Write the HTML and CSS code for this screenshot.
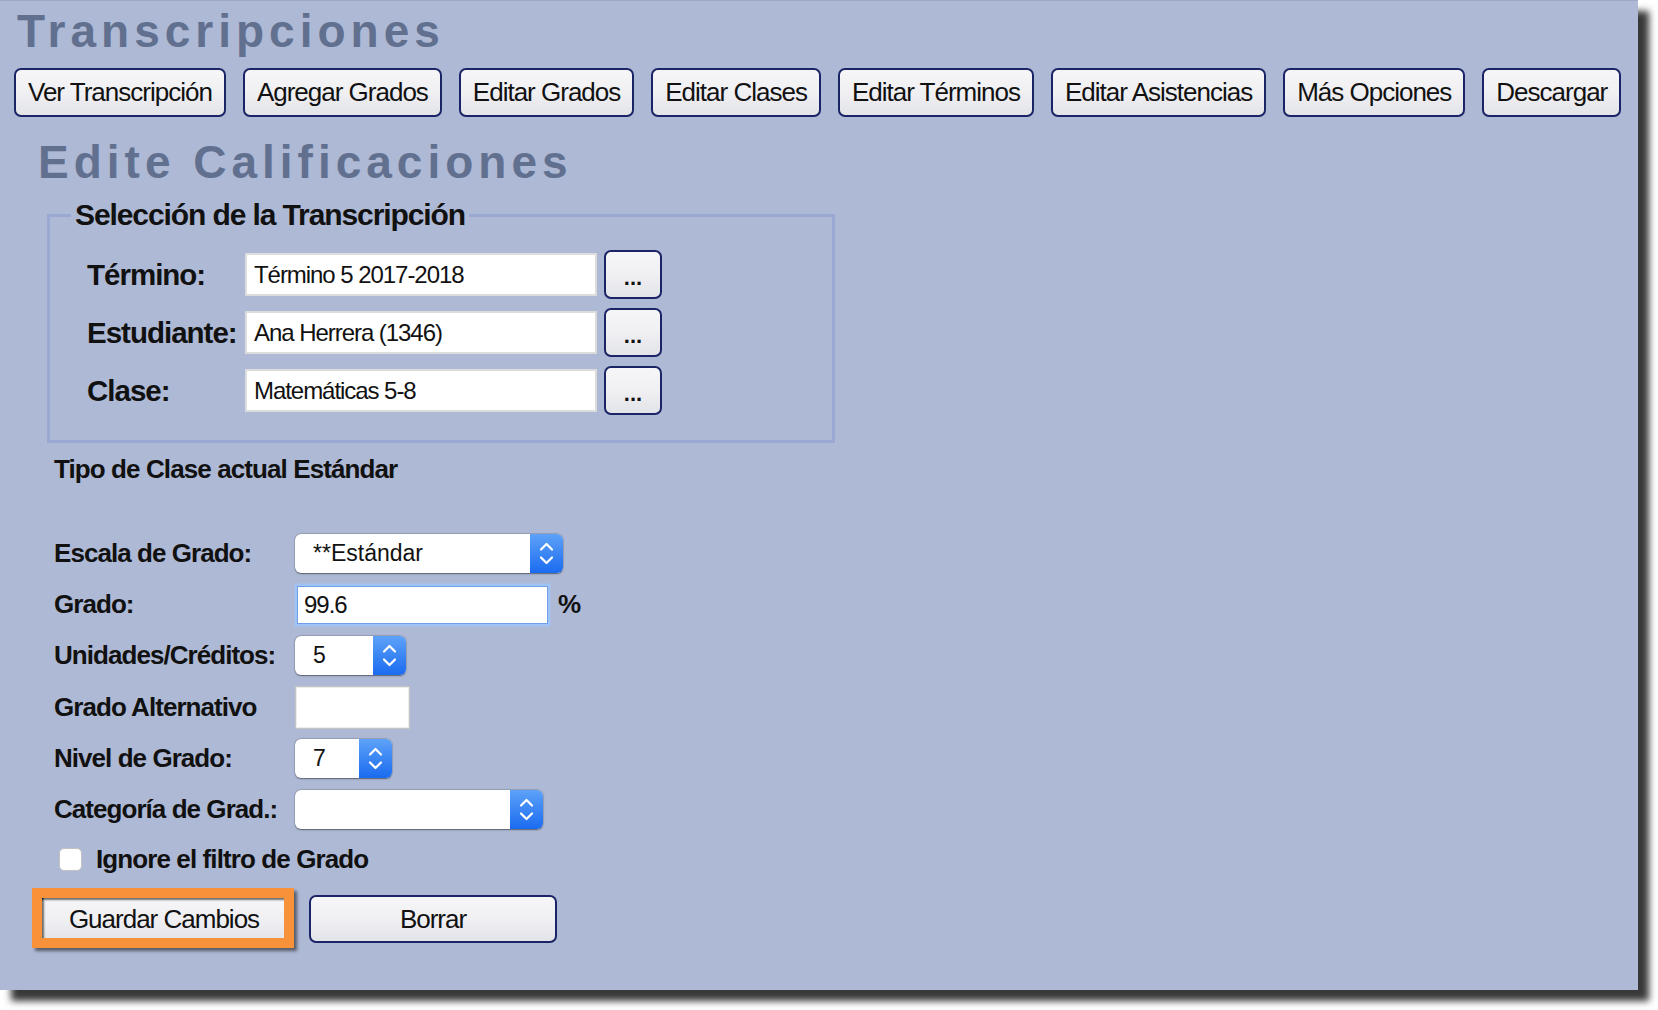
FILE: index.html
```html
<!DOCTYPE html>
<html>
<head>
  <title>Transcripciones</title>
  <link rel="stylesheet" href="styles.css">
</head>
<body>
  <div class="window">
    <h1 class="page-title">Transcripciones</h1>

    <div class="tabs">
      <button class="btn">Ver Transcripción</button>
      <button class="btn">Agregar Grados</button>
      <button class="btn">Editar Grados</button>
      <button class="btn">Editar Clases</button>
      <button class="btn">Editar Términos</button>
      <button class="btn">Editar Asistencias</button>
      <button class="btn">Más Opciones</button>
      <button class="btn">Descargar</button>
    </div>

    <h2 class="section-title">Edite Calificaciones</h2>

    <fieldset class="pick">
      <legend>Selección de la Transcripción</legend>
      <div class="pick-rows">
        <div class="pick-row">
          <label class="pick-label">Término:</label>
          <input class="pick-input" type="text" value="Término 5 2017-2018">
          <button class="btn dots">...</button>
        </div>
        <div class="pick-row">
          <label class="pick-label">Estudiante:</label>
          <input class="pick-input" type="text" value="Ana Herrera (1346)">
          <button class="btn dots">...</button>
        </div>
        <div class="pick-row">
          <label class="pick-label">Clase:</label>
          <input class="pick-input" type="text" value="Matemáticas 5-8">
          <button class="btn dots">...</button>
        </div>
      </div>
    </fieldset>

    <p class="class-type">Tipo de Clase actual Estándar</p>

    <div class="grade-form">
      <div class="grade-row">
        <label class="grade-label">Escala de Grado:</label>
        <div class="select select-scale">
          <span class="select-value">**Estándar</span>
          <span class="select-arrow"><svg viewBox="0 0 33 39" width="33" height="39"><polyline points="11,15.5 16.5,10 22,15.5"/><polyline points="11,23.5 16.5,29 22,23.5"/></svg></span>
        </div>
      </div>
      <div class="grade-row">
        <label class="grade-label">Grado:</label>
        <input class="grade-input" type="text" value="99.6">
        <span class="percent">%</span>
      </div>
      <div class="grade-row">
        <label class="grade-label">Unidades/Créditos:</label>
        <div class="select select-units">
          <span class="select-value">5</span>
          <span class="select-arrow"><svg viewBox="0 0 33 39" width="33" height="39"><polyline points="11,15.5 16.5,10 22,15.5"/><polyline points="11,23.5 16.5,29 22,23.5"/></svg></span>
        </div>
      </div>
      <div class="grade-row">
        <label class="grade-label">Grado Alternativo</label>
        <input class="alt-input" type="text" value="">
      </div>
      <div class="grade-row">
        <label class="grade-label">Nivel de Grado:</label>
        <div class="select select-level">
          <span class="select-value">7</span>
          <span class="select-arrow"><svg viewBox="0 0 33 39" width="33" height="39"><polyline points="11,15.5 16.5,10 22,15.5"/><polyline points="11,23.5 16.5,29 22,23.5"/></svg></span>
        </div>
      </div>
      <div class="grade-row">
        <label class="grade-label">Categoría de Grad.:</label>
        <div class="select select-category">
          <span class="select-value"></span>
          <span class="select-arrow"><svg viewBox="0 0 33 39" width="33" height="39"><polyline points="11,15.5 16.5,10 22,15.5"/><polyline points="11,23.5 16.5,29 22,23.5"/></svg></span>
        </div>
      </div>
    </div>

    <div class="check-row">
      <input class="check" type="checkbox">
      <span class="check-label">Ignore el filtro de Grado</span>
    </div>

    <div class="actions">
      <div class="save">
        <button class="btn action-btn">Guardar Cambios</button>
        <span class="highlight"></span>
      </div>
      <button class="btn action-btn">Borrar</button>
    </div>
  </div>
</body>
</html>
```

FILE: styles.css
```css
body {
  margin: 0;
  padding-bottom: 20px;
  background: #fff;
  font-family: "Liberation Sans", Arial, sans-serif;
  color: #111;
}
.window {
  width: 1638px;
  height: 990px;
  box-sizing: border-box;
  background: #aeb9d5;
  border-top: 1px solid #9ea9c8;
  box-shadow: 11px 11px 7px rgba(0, 0, 0, 0.78);
}
.page-title,
.section-title {
  margin: 0;
  font-size: 46px;
  line-height: 56px;
  font-weight: bold;
  letter-spacing: 5px;
  color: #627090;
}
.page-title {
  padding: 2px 0 0 17px;
}
.section-title {
  margin: 17px 0 0 38px;
}
.tabs {
  display: flex;
  gap: 17px;
  margin: 9px 0 0 14px;
}
.btn {
  height: 49px;
  box-sizing: border-box;
  padding: 0 12px;
  border: 2px solid #1b2466;
  border-radius: 7px;
  background: linear-gradient(#f6f6f8, #f0f0f3 50%, #e3e4e8);
  font-family: "Liberation Sans", Arial, sans-serif;
  font-size: 26px;
  letter-spacing: -1px;
  color: #111;
}
.pick {
  width: 788px;
  box-sizing: border-box;
  margin: 9px 0 0 47px;
  padding: 19px 0 25px 21px;
  border: 3px solid #9aa8d4;
}
.pick legend {
  padding: 0 4px;
  font-size: 30px;
  line-height: 32px;
  font-weight: bold;
  letter-spacing: -1.1px;
}
.pick-rows {
  display: flex;
  flex-direction: column;
  gap: 9px;
  margin-left: 16px;
}
.pick-row {
  display: flex;
  align-items: center;
}
.pick-label {
  width: 158px;
  font-size: 29.5px;
  font-weight: bold;
  letter-spacing: -1px;
}
.pick-input {
  width: 352px;
  height: 43px;
  box-sizing: border-box;
  margin: 0;
  padding: 0 0 0 7px;
  border: 2px solid #dcdcdc;
  background: #fff;
  font-family: "Liberation Sans", Arial, sans-serif;
  font-size: 24px;
  letter-spacing: -1.05px;
  color: #111;
}
.dots {
  width: 58px;
  margin-left: 7px;
  padding: 6px 0 0;
  font-size: 22px;
  font-weight: bold;
  letter-spacing: 0;
}
.class-type {
  margin: 11px 0 0 54px;
  font-size: 26px;
  line-height: 30px;
  font-weight: bold;
  letter-spacing: -0.9px;
}
.grade-form {
  margin: 44px 0 0 54px;
}
.grade-row {
  display: flex;
  align-items: center;
  height: 51.2px;
}
.grade-label {
  width: 241px;
  font-size: 26px;
  font-weight: bold;
  letter-spacing: -0.95px;
}
.select {
  display: flex;
  height: 39px;
  border-radius: 6px;
  background: #fff;
  box-shadow: 0 0.5px 1.5px rgba(0, 0, 0, 0.45), 0 0 0 0.5px rgba(0, 0, 0, 0.12);
  overflow: hidden;
}
.select-scale { width: 268px; }
.select-units { width: 111px; }
.select-level { width: 97px; }
.select-category { width: 248px; }
.select-value {
  flex: 1;
  padding-left: 18px;
  font-size: 23px;
  line-height: 39px;
}
.select-arrow {
  width: 33px;
  background: linear-gradient(#5ea2f8, #1a6bf0);
}
.select-arrow svg {
  display: block;
  fill: none;
  stroke: #fff;
  stroke-width: 2.2;
  stroke-linecap: round;
  stroke-linejoin: round;
}
.grade-input {
  width: 251px;
  height: 38px;
  box-sizing: border-box;
  margin: 0 0 0 2px;
  padding: 0 0 0 6px;
  border: 1px solid #6d9ee6;
  box-shadow: 0 0 0 2.5px #a1c3f3;
  outline: none;
  font-family: "Liberation Sans", Arial, sans-serif;
  font-size: 24px;
  letter-spacing: -1px;
  color: #111;
}
.percent {
  margin-left: 10px;
  font-size: 26px;
  font-weight: bold;
}
.alt-input {
  width: 115px;
  height: 43px;
  box-sizing: border-box;
  margin: 0;
  border: 1px solid #c4c4c4;
  box-shadow: inset 0 0 0 1px #ececec;
  background: #fff;
}
.check-row {
  display: flex;
  align-items: center;
  height: 48px;
  margin-left: 59px;
}
.check {
  appearance: none;
  width: 23px;
  height: 23px;
  margin: 0;
  border: 1px solid #c2c2c2;
  border-radius: 5px;
  background: #fff;
}
.check-label {
  margin-left: 14px;
  font-size: 26px;
  font-weight: bold;
  letter-spacing: -0.9px;
}
.actions {
  display: flex;
  gap: 21px;
  margin: 12px 0 0 40px;
}
.action-btn {
  width: 248px;
  height: 48px;
}
.save {
  position: relative;
}
.highlight {
  position: absolute;
  left: -8px;
  top: -7px;
  width: 262px;
  height: 60px;
  box-sizing: border-box;
  border: 10px solid #f7923b;
  box-shadow: 3px 3px 3px rgba(0, 0, 0, 0.5), inset 2px 2px 2px rgba(0, 0, 0, 0.55);
}
```
